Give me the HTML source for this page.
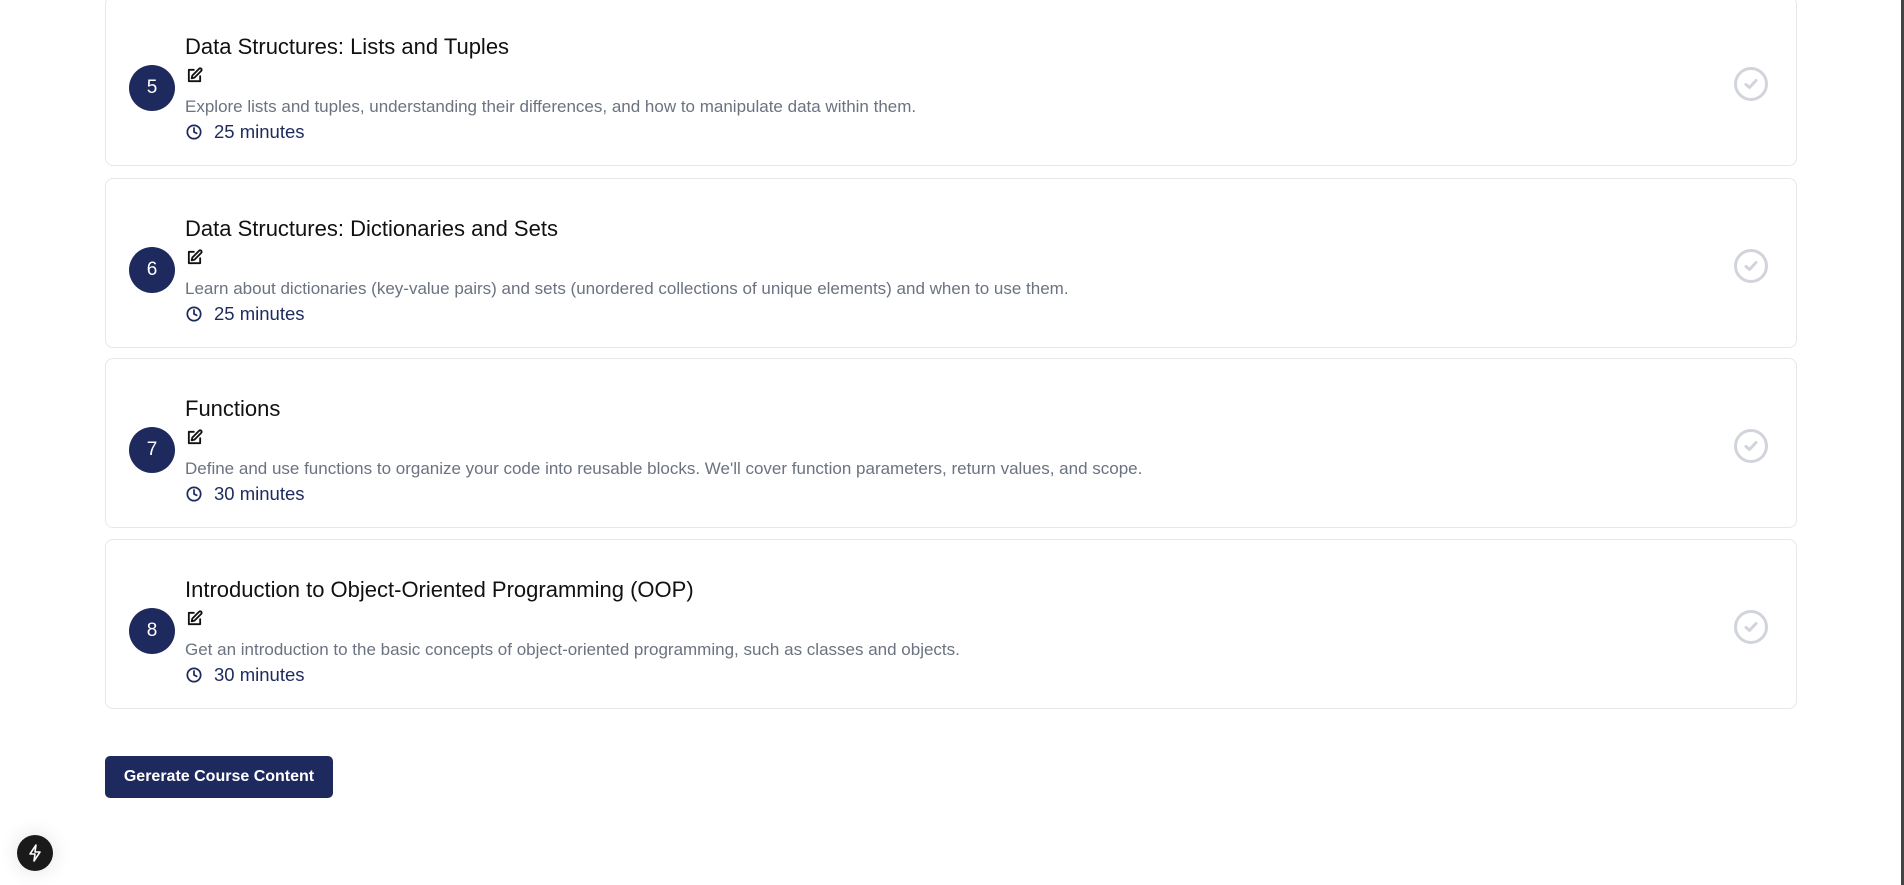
<!DOCTYPE html>
<html><head><meta charset="utf-8"><style>
*{margin:0;padding:0;box-sizing:border-box}
body{width:1904px;height:885px;background:#fff;font-family:"Liberation Sans",sans-serif;position:relative;overflow:hidden}
.card{position:absolute;left:105px;width:1692px;height:170px;border:1px solid #e5e7eb;border-radius:8px;background:#fff}
.num{position:absolute;left:23px;top:68px;width:46px;height:46px;border-radius:50%;background:#1e2a5e;color:#fff;font-size:19px;display:flex;align-items:center;justify-content:center}
.title{position:absolute;left:79px;top:37px;font-size:22px;color:#111;white-space:nowrap}
.edit{position:absolute;left:80px;top:70px}
.desc{position:absolute;left:79px;top:100px;font-size:17px;color:#6b7280;white-space:nowrap}
.dur{position:absolute;left:80px;top:124px;font-size:18.5px;color:#1e2a5e;white-space:nowrap;display:flex;align-items:center}
.dur svg{margin-right:12px}
.chk{position:absolute;left:1627px;top:69px}
.btn{position:absolute;left:105px;top:756px;width:228px;height:42px;background:#1e2a5e;color:#fff;border-radius:5px;font-size:16px;font-weight:bold;display:flex;align-items:center;justify-content:center}
.bolt{position:absolute;left:17px;top:835px;width:36px;height:36px;border-radius:50%;background:#1a1a1a;display:flex;align-items:center;justify-content:center;box-shadow:0 0 20px rgba(0,0,0,.12)}
.sb{position:absolute;right:0;top:0;width:3px;height:885px;background:#444}
</style></head><body>
<div class="sb"></div>

<div class="card" style="top:-4px">
<div class="num">5</div><div class="title">Data Structures: Lists and Tuples</div>
<svg class="edit" width="17" height="17" viewBox="0 0 24 24" fill="none" stroke="#111" stroke-width="2.6" stroke-linecap="round" stroke-linejoin="round"><path d="M11 4H4v16h16v-7"/><path d="M18.5 2.5a2.1 2.1 0 0 1 3 3L12 15l-4 1 1-4z"/></svg>
<div class="desc">Explore lists and tuples, understanding their differences, and how to manipulate data within them.</div>
<div class="dur"><svg width="16" height="16" viewBox="0 0 24 24" fill="none" stroke="#1e2a5e" stroke-width="2.6" stroke-linecap="round"><circle cx="12" cy="12" r="10"/><path d="M12 6v6l4 2"/></svg>25 minutes</div>
<svg class="chk" width="36" height="36" viewBox="0 0 36 36" fill="none" stroke="#d1d5db" stroke-width="3" stroke-linecap="round" stroke-linejoin="round"><circle cx="18" cy="18" r="15.5"/><path d="M13 18.5l3.5 3 6.5-7"/></svg>
</div>

<div class="card" style="top:178px">
<div class="num">6</div><div class="title">Data Structures: Dictionaries and Sets</div>
<svg class="edit" width="17" height="17" viewBox="0 0 24 24" fill="none" stroke="#111" stroke-width="2.6" stroke-linecap="round" stroke-linejoin="round"><path d="M11 4H4v16h16v-7"/><path d="M18.5 2.5a2.1 2.1 0 0 1 3 3L12 15l-4 1 1-4z"/></svg>
<div class="desc">Learn about dictionaries (key-value pairs) and sets (unordered collections of unique elements) and when to use them.</div>
<div class="dur"><svg width="16" height="16" viewBox="0 0 24 24" fill="none" stroke="#1e2a5e" stroke-width="2.6" stroke-linecap="round"><circle cx="12" cy="12" r="10"/><path d="M12 6v6l4 2"/></svg>25 minutes</div>
<svg class="chk" width="36" height="36" viewBox="0 0 36 36" fill="none" stroke="#d1d5db" stroke-width="3" stroke-linecap="round" stroke-linejoin="round"><circle cx="18" cy="18" r="15.5"/><path d="M13 18.5l3.5 3 6.5-7"/></svg>
</div>

<div class="card" style="top:358px">
<div class="num">7</div><div class="title">Functions</div>
<svg class="edit" width="17" height="17" viewBox="0 0 24 24" fill="none" stroke="#111" stroke-width="2.6" stroke-linecap="round" stroke-linejoin="round"><path d="M11 4H4v16h16v-7"/><path d="M18.5 2.5a2.1 2.1 0 0 1 3 3L12 15l-4 1 1-4z"/></svg>
<div class="desc">Define and use functions to organize your code into reusable blocks. We'll cover function parameters, return values, and scope.</div>
<div class="dur"><svg width="16" height="16" viewBox="0 0 24 24" fill="none" stroke="#1e2a5e" stroke-width="2.6" stroke-linecap="round"><circle cx="12" cy="12" r="10"/><path d="M12 6v6l4 2"/></svg>30 minutes</div>
<svg class="chk" width="36" height="36" viewBox="0 0 36 36" fill="none" stroke="#d1d5db" stroke-width="3" stroke-linecap="round" stroke-linejoin="round"><circle cx="18" cy="18" r="15.5"/><path d="M13 18.5l3.5 3 6.5-7"/></svg>
</div>

<div class="card" style="top:539px">
<div class="num">8</div><div class="title">Introduction to Object-Oriented Programming (OOP)</div>
<svg class="edit" width="17" height="17" viewBox="0 0 24 24" fill="none" stroke="#111" stroke-width="2.6" stroke-linecap="round" stroke-linejoin="round"><path d="M11 4H4v16h16v-7"/><path d="M18.5 2.5a2.1 2.1 0 0 1 3 3L12 15l-4 1 1-4z"/></svg>
<div class="desc">Get an introduction to the basic concepts of object-oriented programming, such as classes and objects.</div>
<div class="dur"><svg width="16" height="16" viewBox="0 0 24 24" fill="none" stroke="#1e2a5e" stroke-width="2.6" stroke-linecap="round"><circle cx="12" cy="12" r="10"/><path d="M12 6v6l4 2"/></svg>30 minutes</div>
<svg class="chk" width="36" height="36" viewBox="0 0 36 36" fill="none" stroke="#d1d5db" stroke-width="3" stroke-linecap="round" stroke-linejoin="round"><circle cx="18" cy="18" r="15.5"/><path d="M13 18.5l3.5 3 6.5-7"/></svg>
</div>

<div class="btn">Gererate Course Content</div>
<div class="bolt"><svg width="16" height="18" viewBox="0 0 16 18" fill="none" stroke="#fff" stroke-width="1.6" stroke-linejoin="round"><path d="M9 1L3 10h5l-1 7 6-9H8z"/></svg></div>
</body></html>
